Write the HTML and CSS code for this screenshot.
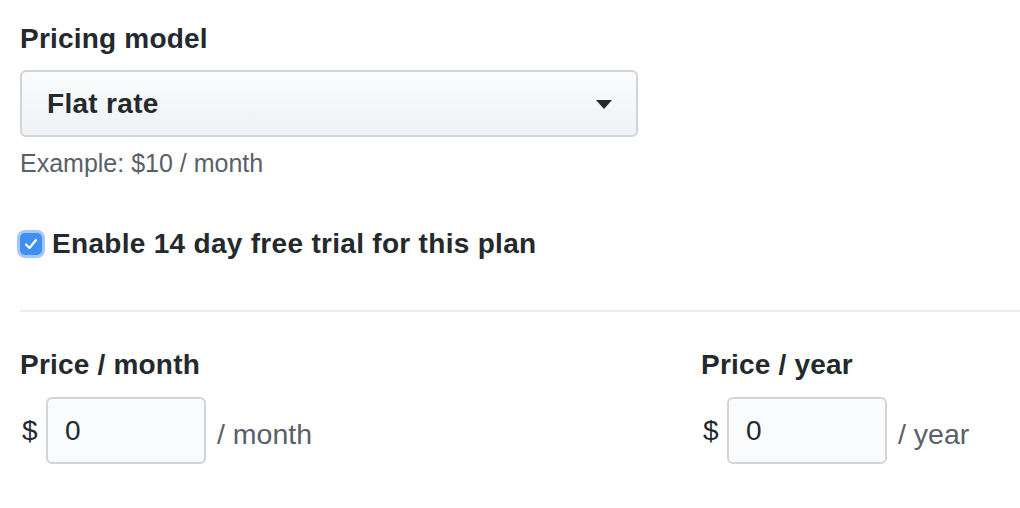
FILE: index.html
```html
<!DOCTYPE html>
<html>
<head>
<meta charset="utf-8">
<link rel="stylesheet" href="styles.css">
</head>
<body>
<div class="page">
  <div class="field">
    <label class="label">Pricing model</label>
    <div class="select">
      <span class="select-text">Flat rate</span>
      <svg class="caret" width="16" height="10" viewBox="0 0 16 10"><path d="M0 0 H16 L8 9 Z" fill="#24292e"/></svg>
    </div>
    <p class="note">Example: $10 / month</p>
  </div>
  <div class="check-row">
    <span class="checkbox">
      <svg width="16" height="14" viewBox="0 0 16 14"><path d="M3 7.5 L6.5 11 L13 3" fill="none" stroke="#fff" stroke-width="2.2" stroke-linecap="round" stroke-linejoin="round"/></svg>
    </span>
    <span class="check-label">Enable 14 day free trial for this plan</span>
  </div>
  <hr class="divider">
  <div class="prices">
    <div class="price">
      <div class="label">Price / month</div>
      <div class="price-row">
        <span class="currency">$</span>
        <span class="input">0</span>
        <span class="unit">/ month</span>
      </div>
    </div>
    <div class="price">
      <div class="label">Price / year</div>
      <div class="price-row">
        <span class="currency">$</span>
        <span class="input">0</span>
        <span class="unit">/ year</span>
      </div>
    </div>
  </div>
</div>
</body>
</html>
```

FILE: styles.css
```css
html, body {
  margin: 0;
  padding: 0;
  background: #fff;
}
body {
  font-family: "Liberation Sans", Arial, sans-serif;
  color: #24292e;
  overflow: hidden;
}
.page {
  padding: 18px 0 0 20px;
}
.label {
  display: block;
  font-size: 28px;
  font-weight: bold;
  line-height: 42px;
  letter-spacing: 0.2px;
}
.select {
  margin-top: 10px;
  height: 63px;
  border: 2px solid #d1d5da;
  border-radius: 6px;
  background: linear-gradient(#fafbfc, #eff3f6);
  display: flex;
  align-items: center;
  justify-content: space-between;
  padding: 0 24px 0 25px;
  box-sizing: content-box;
  width: 565px;
}
.select-text {
  font-size: 28px;
  font-weight: bold;
  letter-spacing: 0.3px;
}
.caret {
  display: block;
  margin-top: 2px;
}
.note {
  margin: 9px 0 0;
  font-size: 25px;
  line-height: 34px;
  color: #586069;
}
.check-row {
  margin-top: 46px;
  display: flex;
  align-items: center;
  height: 36px;
}
.checkbox {
  width: 22px;
  height: 22px;
  border-radius: 5px;
  background: #3e8ff0;
  box-shadow: 0 0 0 3px #a3c8f7;
  display: flex;
  align-items: center;
  justify-content: center;
  flex: none;
}
.checkbox svg { display: block; }
.check-label {
  margin-left: 10px;
  font-size: 28px;
  font-weight: bold;
  letter-spacing: 0.3px;
}
.divider {
  margin: 48px 0 0;
  border: 0;
  height: 2px;
  background: #eaecef;
}
.prices {
  margin-top: 32px;
  display: grid;
  grid-template-columns: 681px 1fr;
}
.price-row {
  margin-top: 11px;
  display: flex;
  align-items: center;
}
.currency {
  font-size: 28px;
  margin-left: 2px;
  width: 24px;
}
.input {
  box-sizing: border-box;
  width: 160px;
  height: 67px;
  border: 2px solid #d1d5da;
  border-radius: 6px;
  background: #fafbfc;
  font-size: 28px;
  padding-left: 17px;
  display: flex;
  align-items: center;
}
.unit {
  margin-left: 11px;
  margin-top: 8px;
  font-size: 28.5px;
  color: #586069;
}
```
